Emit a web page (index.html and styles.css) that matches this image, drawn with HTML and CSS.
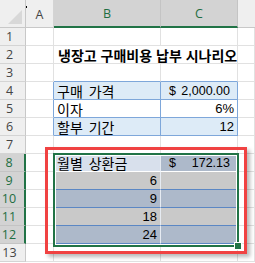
FILE: index.html
```html
<!DOCTYPE html>
<html lang="ko">
<head>
<meta charset="utf-8">
<link rel="stylesheet" href="styles.css">
</head>
<body>
<div class="sheet">
  <div class="grid">
    <div class="corner"><span class="tri"></span></div>
    <div class="ch">A</div>
    <div class="ch sel">B</div>
    <div class="ch sel">C</div>
    <div class="ch last"></div>

    <div class="rh">1</div><div class="c"></div><div class="c"></div><div class="c"></div><div class="c"></div>
    <div class="rh">2</div><div class="c"></div><div class="c title span2">냉장고 구매비용 납부 시나리오</div><div class="c"></div>
    <div class="rh">3</div><div class="c"></div><div class="c bb-blue"></div><div class="c bb-blue"></div><div class="c"></div>

    <div class="rh">4</div><div class="c br-blue"></div><div class="c tb fill-blue">구매 가격</div><div class="c tb fill-blue acct"><span>$</span><span>2,000.00</span></div><div class="c"></div>
    <div class="rh">5</div><div class="c br-blue"></div><div class="c tb">이자</div><div class="c tb num">6%</div><div class="c"></div>
    <div class="rh">6</div><div class="c br-blue"></div><div class="c tb fill-blue">할부 기간</div><div class="c tb fill-blue num">12</div><div class="c"></div>
    <div class="rh">7</div><div class="c"></div><div class="c"></div><div class="c"></div><div class="c"></div>

    <div class="rh sel">8</div><div class="c"></div><div class="c t2 active">월별 상환금</div><div class="c t2 head acct"><span>$</span><span>172.13</span></div><div class="c"></div>
    <div class="rh sel">9</div><div class="c"></div><div class="c t2 gray num">6</div><div class="c t2 gray"></div><div class="c"></div>
    <div class="rh sel">10</div><div class="c"></div><div class="c t2 blu num">9</div><div class="c t2 blu"></div><div class="c"></div>
    <div class="rh sel">11</div><div class="c"></div><div class="c t2 gray num">18</div><div class="c t2 gray"></div><div class="c"></div>
    <div class="rh sel">12</div><div class="c"></div><div class="c t2 blu num">24</div><div class="c t2 blu"></div><div class="c"></div>
    <div class="rh">13</div><div class="c"></div><div class="c"></div><div class="c"></div><div class="c"></div>
  </div>
  <div class="highlight"></div>
  <div class="selection"><span class="handle"></span></div>
  <span class="dot"></span>
</div>
</body>
</html>
```

FILE: styles.css
```css
html, body {
  margin: 0;
  padding: 0;
  background: #ffffff;
}

.sheet {
  position: relative;
  width: 255px;
  height: 263px;
  overflow: hidden;
}

.grid {
  display: grid;
  grid-template-columns: 26px 28px 107px 77px 17px;
  grid-template-rows: 28px repeat(13, 18px);
  font-family: "Liberation Sans", "Noto Sans CJK KR", sans-serif;
  font-size: 13px;
  color: #000;
}

.grid > div {
  box-sizing: border-box;
  min-width: 0;
}

.corner {
  position: relative;
  background: #efefef;
  border-right: 1px solid #c8c8c8;
  border-bottom: 1px solid #c8c8c8;
}

.tri {
  position: absolute;
  right: 3px;
  bottom: 3px;
  width: 14px;
  height: 14px;
  background: #d8d8d8;
  clip-path: polygon(100% 0, 100% 100%, 0 100%);
}

.ch {
  background: #efefef;
  border-right: 1px solid #d4d4d4;
  border-bottom: 1px solid #c8c8c8;
  display: flex;
  align-items: center;
  justify-content: center;
  font-family: "Open Sans", "Liberation Sans", sans-serif;
  font-size: 12.5px;
  color: #444;
  padding-top: 1px;
}

.ch.sel {
  background: #d3d3d3;
  color: #1e6e42;
  border-bottom: 2px solid #217346;
  border-right-color: #c4c4c4;
}

.ch.last {
  border-right: none;
}

.rh {
  background: #efefef;
  border-right: 1px solid #c8c8c8;
  border-bottom: 1px solid #d4d4d4;
  display: flex;
  align-items: center;
  justify-content: center;
  padding-right: 6px;
  font-family: "Open Sans", "Liberation Sans", sans-serif;
  font-size: 12.5px;
  color: #444;
}

.rh.sel {
  background: #d3d3d3;
  color: #1e6e42;
  border-right: 2px solid #217346;
  border-bottom-color: #c4c4c4;
}

.c {
  border-right: 1px solid #e1e1e1;
  border-bottom: 1px solid #e1e1e1;
  display: flex;
  align-items: center;
  padding: 0 3px;
  white-space: nowrap;
  font-family: "Liberation Sans", "Noto Sans CJK KR", sans-serif;
}

.span2 {
  grid-column: span 2;
}

.title {
  font-family: "Noto Sans CJK KR", sans-serif;
  font-weight: 700;
  font-size: 14px;
  padding-left: 4px;
}

.bb-blue {
  border-bottom-color: #7ea7da;
}

.br-blue {
  border-right-color: #7ea7da;
}

.tb {
  border-right-color: #7ea7da;
  border-bottom-color: #7ea7da;
  font-family: "Noto Sans CJK KR", "Liberation Sans", sans-serif;
  font-size: 14px;
  word-spacing: 2px;
}

.fill-blue {
  background: #ddebf7;
}

.num {
  justify-content: flex-end;
  font-family: "Liberation Sans", sans-serif;
  font-size: 13px;
  word-spacing: 0;
}

.acct {
  justify-content: space-between;
  padding-left: 8px;
  padding-right: 7px;
  font-family: "Liberation Sans", sans-serif;
  font-size: 12.5px;
  word-spacing: 0;
}

.t2 {
  border-bottom-color: #5b87c4;
  border-right-color: #e6ebf2;
  font-family: "Noto Sans CJK KR", "Liberation Sans", sans-serif;
  font-size: 14px;
  word-spacing: 2px;
}

.t2.num {
  font-family: "Liberation Sans", sans-serif;
  font-size: 13px;
  word-spacing: 0;
}

.t2.acct {
  font-family: "Liberation Sans", sans-serif;
  font-size: 12.5px;
  word-spacing: 0;
}

.active {
  background: #d8e0ec;
  border-bottom-color: #ffffff;
}

.head {
  background: #adb9ca;
  border-bottom-color: #ffffff;
}

.gray {
  background: #c9c9c9;
}

.blu {
  background: #adb9ca;
}

.highlight {
  position: absolute;
  left: 45px;
  top: 147px;
  width: 202px;
  height: 107px;
  box-sizing: border-box;
  border: 3px solid #f04242;
  box-shadow: 3px 3px 4px rgba(0, 0, 0, 0.28);
}

.selection {
  position: absolute;
  left: 53px;
  top: 153px;
  width: 186px;
  height: 94px;
  box-sizing: border-box;
  border: 2px solid #217346;
  box-shadow: inset 0 0 0 1px #ffffff;
}

.handle {
  position: absolute;
  right: -5px;
  bottom: -5px;
  width: 6px;
  height: 6px;
  background: #217346;
  border: 1px solid #ffffff;
}

.dot {
  position: absolute;
  left: 26px;
  top: 6px;
  width: 1px;
  height: 2px;
  background: #000;
}
```
